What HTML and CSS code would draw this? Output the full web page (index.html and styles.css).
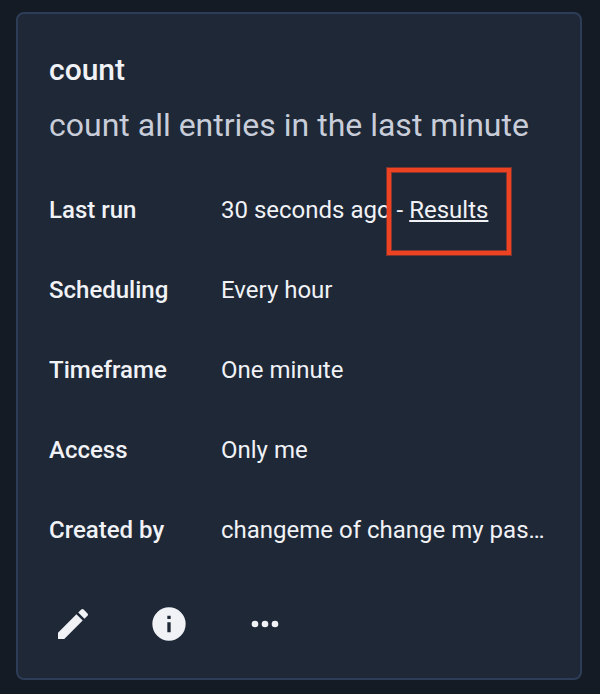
FILE: index.html
```html
<!DOCTYPE html>
<html lang="en">
<head>
<meta charset="utf-8">
<title>Scheduled queries</title>
<link rel="stylesheet" href="styles.css">
</head>
<body>
<article class="card">
  <h2 class="title">count</h2>
  <p class="description">count all entries in the last minute</p>
  <dl class="details">
    <dt>Last run</dt><dd><span class="ago">30 seconds ago</span> - <span class="results"><a href="#">Results</a><span class="highlight"></span></span></dd>
    <dt>Scheduling</dt><dd>Every hour</dd>
    <dt>Timeframe</dt><dd>One minute</dd>
    <dt>Access</dt><dd>Only me</dd>
    <dt>Created by</dt><dd>changeme of change my pas…</dd>
  </dl>
  <div class="actions">
    <button aria-label="Edit"><svg viewBox="0 0 24 24"><path d="M3 17.25V21h3.75L17.81 9.94l-3.75-3.75L3 17.25zM20.71 7.04a1 1 0 0 0 0-1.41l-2.34-2.34a1 1 0 0 0-1.41 0l-1.83 1.83 3.75 3.75 1.83-1.83z"/></svg></button>
    <button aria-label="Info"><svg viewBox="0 0 24 24"><path d="M12 2a10 10 0 1 0 0 20 10 10 0 0 0 0-20zm1 15h-2v-6h2v6zm0-8h-2V7h2v2z"/></svg></button>
    <button aria-label="More"><svg viewBox="0 0 24 24"><path d="M6 10a2 2 0 1 0 0 4 2 2 0 0 0 0-4zm12 0a2 2 0 1 0 0 4 2 2 0 0 0 0-4zm-6 0a2 2 0 1 0 0 4 2 2 0 0 0 0-4z"/></svg></button>
  </div>
</article>
</body>
</html>
```
FILE: styles.css
```css
* { box-sizing: border-box; }
body { margin: 0; padding: 12px 18px 14px 16px; background: #151b24; font-family: Roboto, sans-serif; color: #f0f2f6; }
.card { height: 668px; padding: 38px 31px 0; border: 2px solid #2e3d57; border-radius: 8px; background: #1e2836; }
.title { margin: 0; font-size: 30px; line-height: 36px; font-weight: 500; }
.description { margin: 17px 0 0; font-size: 32px; line-height: 40px; color: #c8cdd9; white-space: nowrap; }
.details { display: grid; grid-template-columns: 172px 324px; grid-auto-rows: 80px; align-items: center; margin: 25px 0 0; font-size: 24px; line-height: 32px; }
dt { font-weight: 500; }
dd { margin: 0; white-space: nowrap; }
.results { position: relative; }
.results a { color: inherit; text-underline-offset: 2px; text-decoration-thickness: 2px; }
.highlight { position: absolute; left: -22px; top: -28px; width: 124px; height: 87px; border: 4px solid #ee4323; box-shadow: 0 0 0 1px rgba(238, 67, 35, .45), inset 0 0 0 1px rgba(238, 67, 35, .5); }
.actions { display: flex; gap: 56px; margin-top: 34px; padding-left: 4px; }
.actions button { width: 40px; height: 40px; padding: 0; border: 0; background: none; }
.actions svg { display: block; width: 40px; height: 40px; fill: #f0f2f6; }
```
